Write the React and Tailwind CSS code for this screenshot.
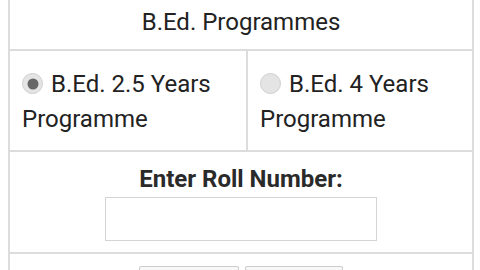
export default function App() {
  return (
    <div className="w-[480px] h-[270px] overflow-hidden bg-white text-[#222]" style={{ fontFamily: 'Roboto, "Liberation Sans", sans-serif' }}>
      <div className="ml-[8px] w-[466px] border-x-2 border-[#dcdcdc]">
        <div className="h-[49px] flex items-center justify-center text-[24px] pb-[6px]">
          B.Ed. Programmes
        </div>
        <div className="h-[101px] border-t-2 border-[#dcdcdc] grid grid-cols-[238px_1fr]">
          <div className="border-r-2 border-[#dcdcdc] pl-[12px] pt-[16px] text-[24px] leading-[35px]">
            <span className="inline-block align-[-2px] w-[21px] h-[21px] rounded-full bg-[#e4e4e4] border border-[#cfcfcf] mr-[8px] relative">
              <span className="absolute left-1/2 top-1/2 -translate-x-1/2 -translate-y-1/2 w-[11px] h-[11px] rounded-full bg-[#666]" />
            </span>
            B.Ed. 2.5 Years Programme
          </div>
          <div className="pl-[12px] pt-[16px] text-[24px] leading-[35px]">
            <span className="inline-block align-[-2px] w-[21px] h-[21px] rounded-full bg-[#e4e4e4] border border-[#cfcfcf] mr-[8px]" />
            B.Ed. 4 Years Programme
          </div>
        </div>
        <div className="h-[102px] border-t-2 border-[#dcdcdc] flex flex-col items-center pt-[13px]">
          <div className="text-[24px] font-bold leading-[28px] text-[#2a2a2a]">Enter Roll Number:</div>
          <div className="mt-[4px] w-[272px] h-[44px] border border-[#d4d4d4]" />
        </div>
        <div className="h-[40px] border-t-2 border-[#dcdcdc] flex justify-center gap-[6px] pt-[12px]">
          <div className="w-[100px] h-[30px] border border-[#ccc] rounded-[2px] bg-[#f8f8f8]" />
          <div className="w-[98px] h-[30px] border border-[#ccc] rounded-[2px] bg-[#f8f8f8]" />
        </div>
      </div>
    </div>
  )
}
